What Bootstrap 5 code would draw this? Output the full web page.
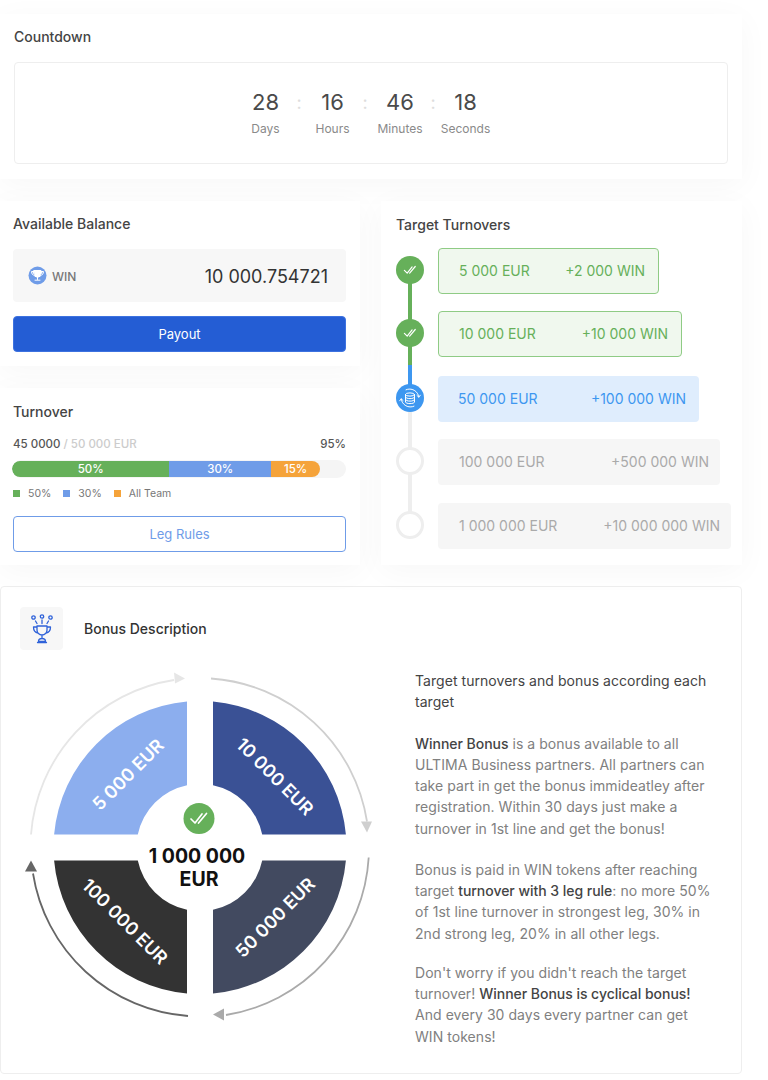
<!DOCTYPE html>
<html lang="en">
<head>
<meta charset="utf-8">
<title>Winner Bonus</title>
<link href="https://cdn.jsdelivr.net/npm/bootstrap@5.3.0/dist/css/bootstrap.min.css" rel="stylesheet">
<style>
body{font-family:Inter,"Liberation Sans",sans-serif;background:#fff;color:#444;font-size:14px;}
.page-wrap{width:742px;padding-top:14px;}
.soft-card{background:#fff;box-shadow:0 6px 30px rgba(0,0,0,.035);}
.cd-card{height:165px;padding:13px 14px 15px;}
.sec-title{font-size:14px;font-weight:500;color:#444;line-height:20px;margin:0;}
.cd-box{height:102px;margin-top:15px;border:1px solid #eee;border-radius:4px;display:grid;grid-template-columns:29px 35px 35px 27px 46px 17px 51px;justify-content:center;align-content:center;}
.cd-num{font-size:22px;line-height:27px;color:#4a4a4a;text-align:center;white-space:nowrap;}
.cd-sep{font-size:18px;line-height:27px;color:#ddd;text-align:center;padding-left:3px;}
.cd-lbl{font-size:12px;line-height:16px;margin-top:5px;color:#8a8a8a;text-align:center;white-space:nowrap;display:flex;justify-content:center;}
.mid-row{margin-top:22px;gap:21px;}
.left-col{width:360px;gap:22px;}
.bal-card{height:165px;padding:13px 14px 0 13px;}
.tn-card{height:177px;padding:14px 14px 0 13px;}
.win-box{height:53px;margin-top:15px;background:#f7f7f7;border-radius:4px;padding:0 18px 0 15px;}
.win-lbl{font-size:12px;font-weight:500;color:#777;padding-top:2px;margin-left:1px;}
.win-val{font-size:18px;color:#333;padding-top:1px;}
.btn-pay{height:36px;margin-top:14px;background:#245dd4;border:1px solid #3d72e0;border-radius:4px;color:#fff;font-size:13px;padding:0;line-height:34px;width:100%;}
.btn-pay:hover{background:#245dd4;color:#fff;}
.tn-head{font-size:11.5px;font-weight:500;color:#555;line-height:16px;margin-top:14px;}
.tn-head span{color:#ccc;}
.tn-bar{height:18px;margin-top:8px;margin-left:-1px;background:#f5f5f5;border-radius:9px;padding:1px 0;}
.tn-bar .progress-bar{font-size:11.5px;font-weight:500;color:#fff;height:16px;line-height:17px;overflow:hidden;}
.c-green{background:#66b05a;}
.c-blue{background:#6f9ce8;}
.c-orange{background:#f5a33a;border-radius:0 8px 8px 0;}
.seg-a{width:47.1%;border-radius:8px 0 0 8px;}
.seg-b{width:30.5%;}
.seg-c{width:14.6%;}
.tn-legend{font-size:10.5px;color:#777;line-height:16px;margin-top:8px;gap:12px;}
.tn-legend i{display:inline-block;width:7px;height:7px;margin-right:8px;}
.btn-leg{height:36px;margin-top:14px;background:#fff;border:1px solid #6f9ce8;border-radius:4px;color:#6f9ce8;font-size:13px;padding:0;line-height:34px;width:100%;}
.tg-card{width:361px;height:364px;padding:14px 0 0 15px;}
.tg-list{margin-top:13px;}
.tg-row{height:46px;margin-bottom:18px;gap:14px;position:relative;}
.tg-row:nth-child(1),.tg-row:nth-child(3){margin-bottom:17px;}
.tg-row:nth-child(2){margin-bottom:19px;}
.tg-node{width:28px;height:28px;border-radius:50%;flex:none;position:relative;z-index:1;display:flex;align-items:center;justify-content:center;margin-top:-2px;}
.tg-row:not(:last-child)::before{content:"";position:absolute;left:12px;top:22px;width:4px;height:65px;background:#eee;}
.row-done::before{background:#66b05a!important;}
.row-split::before{background:linear-gradient(#66b05a 0,#66b05a 50%,#3d97f0 50%,#3d97f0 100%)!important;}
.node-done{background:#66b05a;}
.node-now{background:#3d97f0;}
.node-off{background:#fff;border:3px solid #eee;}
.tg-item{height:46px;border-radius:4px;font-size:14px;padding:0 13px 2px 20px;white-space:nowrap;}
.it-done{background:#f0f8ee;border:1px solid #8fcb85;color:#66b05a;}
.it-now{background:#dfedfd;color:#3d97f0;}
.it-off{background:#f6f6f6;color:#aaa;padding:0 11px 2px 21px;}
.w1{width:221px}.w2{width:244px}.w3{width:261px}.w4{width:282px}.w5{width:293px}
.bonus-card{margin-top:21px;height:488px;border:1px solid #eee;border-radius:4px;background:#fff;padding-top:20px;}
.bonus-head{height:43px;padding-left:19px;gap:21px;}
.ic-box{width:43px;height:43px;background:#f7f7f7;border-radius:4px;}
.bonus-title{font-size:14px;font-weight:500;color:#333;padding-bottom:1px;}
.wheel{width:414px;height:420px;flex:none;display:block;}
.bonus-text{width:300px;padding-top:20px;font-size:14px;line-height:21.25px;color:#808080;letter-spacing:.05px;}
.bonus-text p{margin:0 0 20px;}
.bonus-text p:last-child{margin-top:-2px;}
.bonus-text b{font-weight:500;color:#444;letter-spacing:-.03px;}
.bonus-lead{color:#444;}
.wh-label{font-family:Inter,"Liberation Sans",sans-serif;font-size:18px;font-weight:600;fill:#fff;text-anchor:middle;dominant-baseline:central;}
.wh-center{font-family:Inter,"Liberation Sans",sans-serif;font-size:19.5px;font-weight:700;fill:#111;text-anchor:middle;dominant-baseline:central;}
</style>
</head>
<body class="m-0">
<svg width="0" height="0" class="position-absolute">
  <defs>
    <symbol id="dbl-check" viewBox="0 0 20 14">
      <path d="M2 7.500l4 4 7-9M9.500 11.500L17.500 2" fill="none" stroke="#fff" stroke-width="1.700" stroke-linecap="round" stroke-linejoin="round"/>
    </symbol>
  </defs>
</svg>
<div class="page-wrap">
  <section class="soft-card cd-card">
    <h2 class="sec-title">Countdown</h2>
    <div class="cd-box">
      <div class="cd-num">28</div><div class="cd-sep">:</div><div class="cd-num">16</div><div class="cd-sep">:</div><div class="cd-num">46</div><div class="cd-sep">:</div><div class="cd-num">18</div>
      <div class="cd-lbl">Days</div><div></div><div class="cd-lbl">Hours</div><div></div><div class="cd-lbl">Minutes</div><div></div><div class="cd-lbl">Seconds</div>
    </div>
  </section>

  <div class="d-flex mid-row">
    <div class="d-flex flex-column left-col">
      <section class="soft-card bal-card">
        <h2 class="sec-title">Available Balance</h2>
        <div class="win-box d-flex align-items-center justify-content-between">
          <div class="d-flex align-items-center gap-1">
            <svg width="19" height="19" viewBox="0 0 19 19"><circle cx="9.500" cy="9.500" r="9" fill="#6f9ce8"/><path d="M6 4.500h7v3.200a3.500 3.500 0 0 1-7 0zM6 5.500H3.600c0 2.400 1 3.600 2.800 3.800M13 5.500h2.400c0 2.400-1 3.600-2.800 3.800M9.500 11v2.500M7 14.200h5" fill="#fff" stroke="#fff" stroke-width="1" stroke-linecap="round"/><path d="M4.500 6.200c.1 1.500.7 2.300 1.800 2.600M14.500 6.200c-.1 1.500-.7 2.300-1.800 2.600" fill="none" stroke="#6f9ce8" stroke-width=".8"/></svg>
            <span class="win-lbl">WIN</span>
          </div>
          <span class="win-val">10 000.754721</span>
        </div>
        <button type="button" class="btn btn-pay">Payout</button>
      </section>
      <section class="soft-card tn-card">
        <h2 class="sec-title">Turnover</h2>
        <div class="tn-head d-flex justify-content-between"><div>45 0000 <span>/ 50 000 EUR</span></div><div>95%</div></div>
        <div class="progress tn-bar">
          <div class="progress-bar c-green seg-a">50%</div>
          <div class="progress-bar c-blue seg-b">30%</div>
          <div class="progress-bar c-orange seg-c">15%</div>
        </div>
        <div class="tn-legend d-flex">
          <div><i class="c-green"></i>50%</div>
          <div><i class="c-blue"></i>30%</div>
          <div><i class="c-orange rounded-0"></i>All Team</div>
        </div>
        <button type="button" class="btn btn-leg">Leg Rules</button>
      </section>
    </div>

    <section class="soft-card tg-card">
      <h2 class="sec-title">Target Turnovers</h2>
      <div class="tg-list">
        <div class="tg-row d-flex align-items-center row-done">
          <div class="tg-node node-done"><svg width="14" height="10"><use href="#dbl-check"/></svg></div>
          <div class="tg-item it-done w1 d-flex align-items-center justify-content-between"><span>5 000 EUR</span><span>+2 000 WIN</span></div>
        </div>
        <div class="tg-row d-flex align-items-center row-split">
          <div class="tg-node node-done"><svg width="14" height="10"><use href="#dbl-check"/></svg></div>
          <div class="tg-item it-done w2 d-flex align-items-center justify-content-between"><span>10 000 EUR</span><span>+10 000 WIN</span></div>
        </div>
        <div class="tg-row d-flex align-items-center">
          <div class="tg-node node-now">
            <svg width="24" height="24" viewBox="0 0 24 24" fill="none" stroke="#fff" stroke-width="1" stroke-linecap="round"><ellipse cx="12" cy="8.500" rx="4.500" ry="1.600"/><path d="M7.500 8.500v7.500c0 .9 2 1.600 4.500 1.600s4.500-.7 4.500-1.600V8.500M7.500 11c0 .9 2 1.600 4.500 1.600s4.500-.7 4.500-1.600M7.500 13.500c0 .9 2 1.600 4.500 1.600s4.500-.7 4.500-1.600"/><path d="M8 3.800A9 9 0 0 1 20.800 11M16 20.200A9 9 0 0 1 3.200 13"/><path d="M19 9.500l1.800 1.700 1.500-2M5 14.500l-1.800-1.700-1.500 2"/></svg>
          </div>
          <div class="tg-item it-now w3 d-flex align-items-center justify-content-between"><span>50 000 EUR</span><span>+100 000 WIN</span></div>
        </div>
        <div class="tg-row d-flex align-items-center">
          <div class="tg-node node-off"></div>
          <div class="tg-item it-off w4 d-flex align-items-center justify-content-between"><span>100 000 EUR</span><span>+500 000 WIN</span></div>
        </div>
        <div class="tg-row d-flex align-items-center">
          <div class="tg-node node-off"></div>
          <div class="tg-item it-off w5 d-flex align-items-center justify-content-between"><span>1 000 000 EUR</span><span>+10 000 000 WIN</span></div>
        </div>
      </div>
    </section>
  </div>

  <section class="bonus-card">
    <div class="bonus-head d-flex align-items-center">
      <div class="ic-box d-flex align-items-center justify-content-center">
        <svg width="24" height="30" viewBox="0 0 24 30" fill="none" stroke="#2f62d9" stroke-width="1.300" stroke-linecap="round" stroke-linejoin="round"><circle cx="3.500" cy="3.500" r="1.700"/><circle cx="12" cy="2.500" r="1.700"/><circle cx="20.500" cy="3.500" r="1.700"/><path d="M5.500 7l1.500 2.500M12 6v3.500M18.500 7L17 9.500"/><path d="M7 12h10v4a5 5 0 0 1-10 0zM7 13H3.500c0 3.500 1.500 5.500 4.500 6M17 13h3.500c0 3.500-1.500 5.500-4.500 6M12 21v3M8.500 27.500c0-2 1.500-3 3.500-3s3.500 1 3.500 3zM7.500 28.500h9"/></svg>
      </div>
      <span class="bonus-title">Bonus Description</span>
    </div>
    <div class="d-flex">
      <svg class="wheel" viewBox="0 0 414 420" role="img" aria-label="Bonus cycle">
        <g transform="translate(199 197.500)">
          <path d="M-13 -145.900A146.500 146.500 0 0 0 -145.900 -13L-62.200 -13A63.500 63.500 0 0 1 -13 -62.200Z" fill="#8caeee"/>
          <path d="M13 -145.900A146.500 146.500 0 0 1 145.900 -13L62.200 -13A63.500 63.500 0 0 0 13 -62.200Z" fill="#3a5195"/>
          <path d="M13 145.900A146.500 146.500 0 0 0 145.900 13L62.200 13A63.500 63.500 0 0 1 13 62.200Z" fill="#424a60"/>
          <path d="M-13 145.900A146.500 146.500 0 0 1 -145.900 13L-62.200 13A63.500 63.500 0 0 0 -13 62.200Z" fill="#333"/>

          <g fill="none" stroke-width="1.800">
            <path d="M-169 -13A169.500 169.500 0 0 1 -26 -167.500" stroke="#e6e6e6"/>
            <path d="M11 -169A169.500 169.500 0 0 1 167 -26" stroke="#cfcfcf"/>
            <path d="M168.700 10A169.500 169.500 0 0 1 26 167.500" stroke="#aaa"/>
            <path d="M-12 168.500A169.500 169.500 0 0 1 -167 26" stroke="#666"/>
          </g>
          <polygon points="-15,-169 -26,-175 -25,-164" fill="#e6e6e6"/>
          <polygon points="167,-15 161,-26 172,-26" fill="#cfcfcf"/>
          <polygon points="13,167 24,161 24,173" fill="#aaa"/>
          <polygon points="-169,13 -175,24 -163,24" fill="#666"/>

          <text class="wh-label" transform="translate(-72 -73) rotate(-45)">5 000 EUR</text>
          <text class="wh-label" transform="translate(75 -71) rotate(45)">10 000 EUR</text>
          <text class="wh-label" transform="translate(75 70) rotate(-45)">50 000 EUR</text>
          <text class="wh-label" transform="translate(-75 74) rotate(45)">100 000 EUR</text>

          <circle cx="-1" cy="-29" r="15.500" fill="#66b05a"/>
          <svg x="-11" y="-36" width="20" height="14"><use href="#dbl-check"/></svg>
          <text class="wh-center" x="-3" y="8.500">1 000 000</text>
          <text class="wh-center" x="-1" y="31.500">EUR</text>
        </g>
      </svg>
      <div class="bonus-text">
        <p class="bonus-lead">Target turnovers and bonus according each target</p>
        <p><b>Winner Bonus</b> is a bonus available to all ULTIMA Business partners. All partners can take part in get the bonus immideatley after registration. Within 30 days just make a turnover in 1st line and get the bonus!</p>
        <p>Bonus is paid in WIN tokens after reaching target <b>turnover with 3 leg rule</b>: no more 50% of 1st line turnover in strongest leg, 30% in 2nd strong leg, 20% in all other legs.</p>
        <p>Don't worry if you didn't reach the target turnover! <b>Winner Bonus is cyclical bonus!</b> And every 30 days every partner can get WIN tokens!</p>
      </div>
    </div>
  </section>
</div>
<script src="https://cdn.jsdelivr.net/npm/bootstrap@5.3.0/dist/js/bootstrap.bundle.min.js"></script>
</body>
</html>
